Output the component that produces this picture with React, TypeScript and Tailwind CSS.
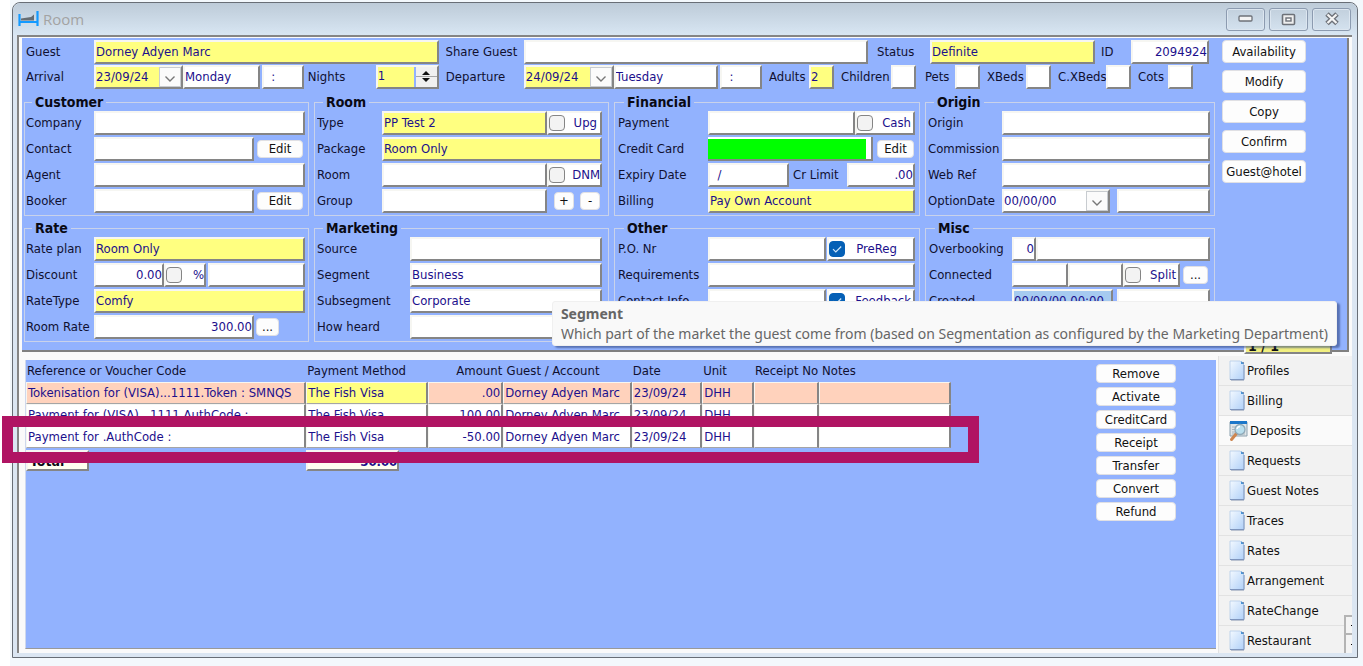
import type { ReactNode } from "react";
import clsx from "clsx";

const bevel =
  "border-2 border-t-[#f6f6f2] border-l-[#f6f6f2] border-r-[#858585] border-b-[#858585]";

const payments = [
  { ref: "Tokenisation for (VISA)...1111.Token : SMNQS", amount: ".00", token: true },
  { ref: "Payment for (VISA)...1111.AuthCode :", amount: "100.00", token: false },
  { ref: "Payment for .AuthCode :", amount: "-50.00", token: false },
];

const actions = ["Remove", "Activate", "CreditCard", "Receipt", "Transfer", "Convert", "Refund"];

const tabs = [
  "Profiles",
  "Billing",
  "Deposits",
  "Requests",
  "Guest Notes",
  "Traces",
  "Rates",
  "Arrangement",
  "RateChange",
  "Restaurant",
];

type FieldProps = {
  id?: string;
  name?: string;
  value?: string;
  tone?: "white" | "yellow" | "blue";
  className?: string;
};

function Field({ id, name, value = "", tone = "white", className = "flex-1" }: FieldProps) {
  return (
    <input
      id={id}
      aria-label={name}
      type="text"
      defaultValue={value}
      className={clsx(
        "h-6 min-w-0 rounded-none pb-0.5 text-[#1c108c] outline-none",
        bevel,
        tone === "yellow" && "bg-[#ffff80]",
        tone === "blue" && "bg-[#a6caf0]",
        tone === "white" && "bg-white",
        className
      )}
    />
  );
}

function Label({ htmlFor, className, children }: { htmlFor: string; className?: string; children: ReactNode }) {
  return (
    <label htmlFor={htmlFor} className={clsx("shrink-0 overflow-hidden whitespace-nowrap text-[#101030]", className)}>
      {children}
    </label>
  );
}

function DateField({ id, value, tone, className }: { id: string; value: string; tone?: string; className?: string }) {
  return (
    <div className={clsx("relative h-6 shrink-0", bevel, tone === "yellow" ? "bg-[#ffff80]" : "bg-white", className)}>
      <select id={id} defaultValue={value} className="h-5 w-full appearance-none bg-transparent text-[#1c108c] outline-none">
        <option>{value}</option>
      </select>
      <span className="pointer-events-none absolute inset-y-0 right-0 flex w-[22px] items-center justify-center border border-[#c8ccd0] bg-[#fbfbfb] pt-1">
        <svg width="12" height="8" viewBox="0 0 12 8" fill="none" stroke="#777" strokeWidth="1.4">
          <path d="M1.5 1.5 6 6l4.500-4.500" />
        </svg>
      </span>
    </div>
  );
}

function Check({ label, checked, className }: { label: string; checked?: boolean; className?: string }) {
  return (
    <label
      className={clsx(
        "relative flex h-6 shrink-0 items-center justify-between overflow-hidden whitespace-nowrap bg-white text-[#1c108c]",
        bevel,
        className
      )}
    >
      <input
        type="checkbox"
        defaultChecked={checked}
        className="size-4 shrink-0 appearance-none rounded border border-[#858585] bg-[#f3f3f3] checked:border-[#0560b6] checked:bg-[#0560b6]"
      />
      {checked && (
        <svg className="pointer-events-none absolute left-0.5 size-3" viewBox="0 0 12 12" fill="none" stroke="#cfe6fa" strokeWidth="1.2">
          <path d="M2 6.200 4.800 9 10.200 3.500" />
        </svg>
      )}
      <span>{label}</span>
    </label>
  );
}

function PlainButton({ children, className }: { children: ReactNode; className?: string }) {
  return (
    <button
      type="button"
      className={clsx(
        "flex shrink-0 items-center justify-center overflow-hidden whitespace-nowrap rounded border border-[#e0e0e4] bg-[#fdfdfd] text-[#111]",
        className
      )}
    >
      {children}
    </button>
  );
}

function Group({ title, className, children }: { title: string; className?: string; children: ReactNode }) {
  return (
    <fieldset className={clsx("min-w-0 border border-[#c9d2ea] pb-0.5", className)}>
      <legend className="ml-1.5 px-[3px] text-sm leading-[18px] font-bold text-[#0a0a14]">{title}</legend>
      <div className="flex flex-col gap-0.5">{children}</div>
    </fieldset>
  );
}

function Row({ children }: { children: ReactNode }) {
  return <div className="flex h-6 items-center">{children}</div>;
}

function Spinner() {
  return (
    <div className="flex w-[23px] flex-col border-l-2 border-[#92b2fe] bg-[#f0f0f0]">
      <button type="button" aria-label="More nights" className="flex h-2.5 items-end justify-center border-b border-[#a8a8a8] pb-px">
        <svg width="8" height="4" viewBox="0 0 8 4"><path d="M0 4 4 0 8 4Z" fill="#111" /></svg>
      </button>
      <button type="button" aria-label="Fewer nights" className="flex h-2.5 items-start justify-center pt-px">
        <svg width="8" height="4" viewBox="0 0 8 4"><path d="M0 0 4 4 8 0Z" fill="#111" /></svg>
      </button>
    </div>
  );
}

function PageIcon() {
  return (
    <svg width="17" height="22" viewBox="0 0 17 22" className="shrink-0">
      <defs>
        <linearGradient id="page" x1="0" y1="0" x2="1" y2="1">
          <stop offset="0" stopColor="#f3f9ff" />
          <stop offset="1" stopColor="#b0d0f8" />
        </linearGradient>
      </defs>
      <path d="M2 2h13v18.500H2z" fill="#8392ae" />
      <path d="M1 1h10l4 4v14.500H1z" fill="url(#page)" stroke="#b4cbe8" strokeWidth=".8" />
      <path d="M15 5v14.500H1" fill="none" stroke="#7e95bd" />
      <path d="M12 1v3h3z" fill="#4b94d6" />
    </svg>
  );
}

function DepositsIcon() {
  return (
    <svg width="20" height="22" viewBox="0 0 20 22" className="shrink-0">
      <path d="M1 2h17v14H1z" fill="#dfe5e8" stroke="#8ba0ae" />
      <path d="M1 1h17v3H1z" fill="#1c77c9" />
      <path d="M3 7h13M3 9.500h13M3 12h13M3 14h13" stroke="#aab5bc" />
      <path d="m7.500 13.500-5 6" stroke="#ce8650" strokeWidth="3" strokeLinecap="round" />
      <circle cx="11" cy="9.500" r="5" fill="#b9dfee" stroke="#8fa9b8" strokeWidth="1.300" />
      <path d="M8 9a3 3 0 0 1 3-2.500" fill="none" stroke="#fff" strokeWidth="1.300" />
    </svg>
  );
}

function TitleBar() {
  const control = "flex h-[23px] w-[39px] items-center justify-center rounded-[3px] border border-[#8c9bb0] shadow-[inset_0_0_0_1px_#dce6f0]";
  return (
    <header className="flex h-8 shrink-0 items-center rounded-t-lg bg-linear-to-b from-[#bdcbd8] to-[#d8e6f3] pr-1.5 pl-[5px]">
      <svg width="21" height="16" viewBox="0 0 21 16">
        <path d="M1.500 3v12M19.500 0v15M1 11h18" stroke="#149aff" strokeWidth="2.200" />
        <path d="M3 9.500V7.500l10-1.500L16 3.500V9.500z" fill="#666d73" />
      </svg>
      <h1 className="ml-1 flex-1 font-['Open_Sans',sans-serif] text-[15px] leading-5 text-[#a3a3a3]">Room</h1>
      <div className="flex gap-1">
        <button type="button" aria-label="Minimize" className={control}>
          <svg width="15" height="8" viewBox="0 0 15 8"><rect x="1" y="1" width="13" height="5" rx="1" fill="#f4f4f4" stroke="#6d7178" strokeWidth="1.300" /></svg>
        </button>
        <button type="button" aria-label="Maximize" className={control}>
          <svg width="15" height="13" viewBox="0 0 15 13"><rect x="1.500" y="1.500" width="12" height="10" rx="1" fill="#eee" stroke="#6d7178" strokeWidth="1.600" /><rect x="5" y="5" width="5" height="3" fill="#fff" stroke="#6d7178" strokeWidth="1.400" /></svg>
        </button>
        <button type="button" aria-label="Close" className={control}>
          <svg width="16" height="14" viewBox="0 0 16 14"><path d="m3 2 10 9.500M13 2 3 11.500" stroke="#6d7178" strokeWidth="5" /><path d="m3.500 2.500 9 8.500M12.500 2.500l-9 8.500" stroke="#f4f4f4" strokeWidth="2.300" /></svg>
        </button>
      </div>
    </header>
  );
}

function Header() {
  return (
    <div className="flex flex-col gap-px pl-1">
      <div className="flex h-6 items-center pr-1.5">
        <Label htmlFor="guest" className="w-[68px]">Guest</Label>
        <Field id="guest" value="Dorney Adyen Marc" tone="yellow" className="flex-[2]" />
        <Label htmlFor="share" className="ml-[7px] mr-1.5 w-[72px]">Share Guest</Label>
        <Field id="share" className="flex-[2]" />
        <Label htmlFor="status" className="ml-[9px] w-[53px]">Status</Label>
        <Field id="status" value="Definite" tone="yellow" className="w-[165px]" />
        <Label htmlFor="resid" className="ml-1.5 w-[30px]">ID</Label>
        <Field id="resid" value="2094924" className="w-[78px] text-right" />
      </div>
      <div className="flex h-6 items-center pr-[22px]">
        <Label htmlFor="arrival" className="w-[68px]">Arrival</Label>
        <DateField id="arrival" value="23/09/24" tone="yellow" className="w-[89px]" />
        <Field name="Arrival day" value="Monday" className="flex-[8]" />
        <Field name="Arrival time" value="  :" className="ml-0.5 w-[42px]" />
        <Label htmlFor="nights" className="ml-1 w-[68px]">Nights</Label>
        <div className={clsx("flex h-6 w-[63px] bg-[#ffff80]", bevel)}>
          <input id="nights" defaultValue="1" className="min-w-0 flex-1 pb-0.5 text-[#1c108c] outline-none" />
          <Spinner />
        </div>
        <Label htmlFor="departure" className="ml-[7px] w-[78px]">Departure</Label>
        <DateField id="departure" value="24/09/24" tone="yellow" className="w-[90px]" />
        <Field name="Departure day" value="Tuesday" className="flex-[11]" />
        <Field name="Departure time" value="  :" className="ml-0.5 w-[42px]" />
        <Label htmlFor="adults" className="ml-[7px] w-10">Adults</Label>
        <Field id="adults" value="2" tone="yellow" className="w-[25px]" />
        <Label htmlFor="children" className="ml-[7px] w-[50px]">Children</Label>
        <Field id="children" className="w-[25px]" />
        <Label htmlFor="pets" className="ml-[9px] w-[30px]">Pets</Label>
        <Field id="pets" className="w-[25px]" />
        <Label htmlFor="xbeds" className="ml-[7px] w-[39px]">XBeds</Label>
        <Field id="xbeds" className="w-[25px]" />
        <Label htmlFor="cxbeds" className="ml-[7px] w-12">C.XBeds</Label>
        <Field id="cxbeds" className="w-[25px]" />
        <Label htmlFor="cots" className="ml-[7px] w-[30px]">Cots</Label>
        <Field id="cots" className="w-[25px]" />
      </div>
    </div>
  );
}

function Groups() {
  const l1 = "w-[68px]";
  const l2 = "w-[65px]";
  const l3 = "w-[90px]";
  return (
    <div className="mt-1 ml-0.5 grid grid-cols-[285fr_295fr_306fr_290fr] gap-x-[5px] gap-y-[3px]">
      <Group title="Customer" className="pr-[3px] pl-px">
        <Row>
          <Label htmlFor="company" className={l1}>Company</Label>
          <Field id="company" />
        </Row>
        <Row>
          <Label htmlFor="contact" className={l1}>Contact</Label>
          <Field id="contact" />
          <PlainButton className="mr-0.5 ml-[3px] h-[18px] w-[46px]">Edit</PlainButton>
        </Row>
        <Row>
          <Label htmlFor="agent" className={l1}>Agent</Label>
          <Field id="agent" />
        </Row>
        <Row>
          <Label htmlFor="booker" className={l1}>Booker</Label>
          <Field id="booker" />
          <PlainButton className="mr-0.5 ml-[3px] h-[18px] w-[46px]">Edit</PlainButton>
        </Row>
      </Group>

      <Group title="Room" className="pr-1.5 pl-0.5">
        <Row>
          <Label htmlFor="type" className={l2}>Type</Label>
          <Field id="type" value="PP Test 2" tone="yellow" />
          <Check label="Upg" className="w-[55px] pr-[3px]" />
        </Row>
        <Row>
          <Label htmlFor="package" className={l2}>Package</Label>
          <Field id="package" value="Room Only" tone="yellow" />
        </Row>
        <Row>
          <Label htmlFor="room" className={l2}>Room</Label>
          <Field id="room" />
          <Check label="DNM" className="w-[55px]" />
        </Row>
        <Row>
          <Label htmlFor="group" className={l2}>Group</Label>
          <Field id="group" />
          <PlainButton className="ml-[7px] h-[18px] w-5">+</PlainButton>
          <PlainButton className="mr-0.5 ml-1.5 h-[18px] w-5">-</PlainButton>
        </Row>
      </Group>

      <Group title="Financial" className="pr-1 pl-[3px]">
        <Row>
          <Label htmlFor="payment" className={l3}>Payment</Label>
          <Field id="payment" />
          <Check label="Cash" className="w-[60px] pr-0.5" />
        </Row>
        <Row>
          <Label htmlFor="card" className={l3}>Credit Card</Label>
          <div className="flex h-6 flex-1 border-r-2 border-b-2 border-[#858585] bg-white pt-0.5 pr-[5px]">
            <input id="card" type="text" className="min-w-0 flex-1 bg-[#00ff00] outline-none" />
          </div>
          <PlainButton className="mr-px ml-1 h-[18px] w-[37px]">Edit</PlainButton>
        </Row>
        <Row>
          <Label htmlFor="expiry" className={l3}>Expiry Date</Label>
          <Field id="expiry" value="  /" />
          <Label htmlFor="limit" className="ml-1 w-[54px]">Cr Limit</Label>
          <Field id="limit" value=".00" className="w-[68px] text-right" />
        </Row>
        <Row>
          <Label htmlFor="billing" className={l3}>Billing</Label>
          <Field id="billing" value="Pay Own Account" tone="yellow" />
        </Row>
      </Group>

      <Group title="Origin" className="pr-1 pl-0.5">
        <Row>
          <Label htmlFor="origin" className="w-[74px]">Origin</Label>
          <Field id="origin" />
        </Row>
        <Row>
          <Label htmlFor="commission" className="w-[74px]">Commission</Label>
          <Field id="commission" />
        </Row>
        <Row>
          <Label htmlFor="webref" className="w-[74px]">Web Ref</Label>
          <Field id="webref" />
        </Row>
        <Row>
          <Label htmlFor="option" className="w-[74px]">OptionDate</Label>
          <DateField id="option" value="00/00/00" className="w-[108px]" />
          <Field name="Option time" className="ml-[7px] flex-1" />
        </Row>
      </Group>

      <Group title="Rate" className="pr-[3px] pl-px">
        <Row>
          <Label htmlFor="rateplan" className={l1}>Rate plan</Label>
          <Field id="rateplan" value="Room Only" tone="yellow" />
        </Row>
        <Row>
          <Label htmlFor="discount" className={l1}>Discount</Label>
          <Field id="discount" value="0.00" className="w-[70px] text-right" />
          <Check label="%" className="w-[42px]" />
          <Field name="Discount reason" className="ml-0.5 flex-1" />
        </Row>
        <Row>
          <Label htmlFor="ratetype" className={l1}>RateType</Label>
          <Field id="ratetype" value="Comfy" tone="yellow" />
        </Row>
        <Row>
          <Label htmlFor="roomrate" className={l1}>Room Rate</Label>
          <Field id="roomrate" value="300.00" className="flex-1 text-right" />
          <PlainButton className="mr-[26px] ml-0.5 h-[18px] w-[23px]">...</PlainButton>
        </Row>
      </Group>

      <Group title="Marketing" className="pr-1.5 pl-0.5">
        <Row>
          <Label htmlFor="source" className="w-[93px]">Source</Label>
          <Field id="source" />
        </Row>
        <Row>
          <Label htmlFor="segment" className="w-[93px]">Segment</Label>
          <Field id="segment" value="Business" />
        </Row>
        <Row>
          <Label htmlFor="subsegment" className="w-[93px]">Subsegment</Label>
          <Field id="subsegment" value="Corporate" />
        </Row>
        <Row>
          <Label htmlFor="heard" className="w-[93px]">How heard</Label>
          <Field id="heard" />
        </Row>
      </Group>

      <Group title="Other" className="pr-1 pl-[3px]">
        <Row>
          <Label htmlFor="ponr" className={l3}>P.O. Nr</Label>
          <Field id="ponr" />
          <Check label="PreReg" checked className="ml-px w-[88px] pr-4" />
        </Row>
        <Row>
          <Label htmlFor="requirements" className={l3}>Requirements</Label>
          <Field id="requirements" />
        </Row>
        <Row>
          <Label htmlFor="info" className={l3}>Contact Info</Label>
          <Field id="info" />
          <Check label="Feedback" checked className="ml-px w-[88px] pr-0.5" />
        </Row>
      </Group>

      <Group title="Misc" className="pr-1 pl-[3px]">
        <Row>
          <Label htmlFor="overbooking" className="w-[83px]">Overbooking</Label>
          <Field id="overbooking" value="0" className="w-6 text-right" />
          <Field name="Overbooking reason" />
        </Row>
        <Row>
          <Label htmlFor="connected" className="w-[83px]">Connected</Label>
          <Field id="connected" />
          <Field name="Connected to" />
          <Check label="Split" className="w-[57px] pr-0.5" />
          <PlainButton className="mr-0.5 ml-[3px] h-[18px] w-[25px]">...</PlainButton>
        </Row>
        <Row>
          <Label htmlFor="created" className="w-[83px]">Created</Label>
          <Field id="created" value="00/00/00 00:00" tone="blue" className="w-[101px]" />
          <Field name="Created by" className="ml-1 flex-1" />
        </Row>
      </Group>
    </div>
  );
}

function PaymentsTable() {
  const cell = "overflow-hidden border-r-2 border-b border-t border-l border-t-[#f6f6f2] border-l-[#f6f6f2] border-r-[#858585] border-b-[#a5a5a5] pr-px pl-px whitespace-nowrap";
  return (
    <table className="w-full table-fixed border-separate border-spacing-0 text-left text-[#1c108c]">
      <colgroup>
        <col className="w-[30.3%]" />
        <col className="w-[13.2%]" />
        <col className="w-[8.1%]" />
        <col className="w-[13.9%]" />
        <col className="w-[7.6%]" />
        <col className="w-[5.6%]" />
        <col className="w-[7%]" />
        <col className="w-[14.3%]" />
      </colgroup>
      <thead>
        <tr className="h-[22px] text-[#101030] [&>th]:overflow-visible [&>th]:px-px [&>th]:font-normal [&>th]:whitespace-nowrap">
          <th>Reference or Voucher Code</th>
          <th>Payment Method</th>
          <th className="text-right">Amount</th>
          <th>&thinsp;Guest / Account</th>
          <th>Date</th>
          <th>Unit</th>
          <th>Receipt No</th>
          <th>&thinsp;Notes</th>
        </tr>
      </thead>
      <tbody>
        {payments.map((p) => (
          <tr key={p.ref} className={clsx("h-[22px]", p.token ? "bg-[#ffd2bc]" : "bg-white")}>
            <td className={cell}>{p.ref}</td>
            <td className={clsx(cell, p.token && "bg-[#ffff80]")}>The Fish Visa</td>
            <td className={clsx(cell, "text-right")}>{p.amount}</td>
            <td className={cell}>Dorney Adyen Marc</td>
            <td className={cell}>23/09/24</td>
            <td className={cell}>DHH</td>
            <td className={cell}></td>
            <td className={cell}></td>
          </tr>
        ))}
      </tbody>
      <tfoot>
        <tr className="font-bold [&>td]:pt-0.5">
          <td>
            <div className={clsx("h-[21px] w-[63px] bg-[#fffff0] px-0.5 text-sm leading-[19px] text-[#0a0a14]", bevel)}>Total</div>
          </td>
          <td>
            <div className={clsx("h-[21px] w-[93px] bg-[#fffff0] text-right leading-[19px]", bevel)}>50.00</div>
          </td>
          <td colSpan={6}></td>
        </tr>
      </tfoot>
    </table>
  );
}

function Tabs() {
  return (
    <nav className="relative flex w-[134px] shrink-0 flex-col overflow-hidden bg-[#f2f2f2] text-[#111] [contain:size]">
      {tabs.map((tab) => {
        const active = tab === "Deposits";
        return (
          <button
            key={tab}
            type="button"
            className={clsx(
              "flex h-[30px] shrink-0 items-center border-b border-l border-[#e2e2e2] pl-2.5 text-left",
              active && "bg-[#fafafa]"
            )}
          >
            {active ? <DepositsIcon /> : <PageIcon />}
            <span className="ml-px">{tab}</span>
          </button>
        );
      })}
      <div className="absolute right-0 bottom-0 flex w-2 flex-col">
        <button type="button" aria-label="Scroll up" className="flex h-5 items-center justify-end border-2 border-r-0 border-[#b4b4b4] bg-[#f4f4f4]">
          <span className="size-px bg-black" />
        </button>
        <button type="button" aria-label="Scroll down" className="flex h-[18px] items-center justify-end border-l-2 border-[#b4b4b4] bg-[#f4f4f4]">
          <span className="size-px bg-black" />
        </button>
      </div>
    </nav>
  );
}

export default function App() {
  return (
    <div className="flex min-h-screen flex-col border-l-[10px] border-white bg-[#f3f8fc] pt-0.5 pr-[5px] pb-2 pl-0.5 font-['DejaVu_Sans_Condensed','DejaVu_Sans',sans-serif] text-[13px] leading-4">
      <div className="flex flex-1 flex-col rounded-t-lg border border-[#686e76] bg-[#dbe6f2]">
        <TitleBar />
        <main className="mr-[5px] mb-1 ml-1 flex flex-1 flex-col border-t-2 border-l-2 border-[#858585] bg-[#fafafa]">
          <section className="relative mt-px mr-[3px] ml-[3px] flex border-r-2 border-b-2 border-[#808080] bg-[#92b2fe] pt-0.5 pb-2">
            <div className="min-w-0 flex-1">
              <Header />
              <Groups />
            </div>
            <div className="ml-[7px] flex w-[125px] flex-col gap-[7px]">
              <PlainButton className="h-[23px] w-[84px]">Availability</PlainButton>
              <PlainButton className="h-[23px] w-[84px]">Modify</PlainButton>
              <PlainButton className="h-[23px] w-[84px]">Copy</PlainButton>
              <PlainButton className="h-[23px] w-[84px]">Confirm</PlainButton>
              <PlainButton className="h-[23px] w-[84px]">Guest@hotel</PlainButton>
              <output className={clsx("mt-auto -mb-3 ml-[22px] h-5 w-[88px] bg-[#f2f080] px-0.5 text-sm leading-5 font-bold text-[#111]", bevel)}>
                1 / 1
              </output>
            </div>
            <div
              role="tooltip"
              className="absolute right-2.5 bottom-1 rounded-[3px] border border-[#f0f0f0] bg-[#f9f9f9] pt-0.5 pr-2 pb-px pl-2 font-['Noto_Sans',sans-serif] text-sm leading-5 whitespace-nowrap text-[#666] shadow-[3px_2px_2px_#2a3f7890]"
            >
              <p className="font-bold">Segment</p>
              <p>Which part of the market the guest come from (based on Segmentation as configured by the Marketing Department)</p>
            </div>
          </section>

          <div className="flex flex-1 gap-0.5 pt-1">
            <section className="mt-1 mb-1 ml-1.5 flex flex-1 items-start border-b border-l border-b-[#999] border-l-[#cfd8ec] bg-[#92b2fe]">
              <div className="relative flex-1">
                <PaymentsTable />
                {/* marker around the refund line */}
                <div className="pointer-events-none absolute top-14 -right-7 -left-6 h-[47px] border-[11px] border-[#b01463]" />
              </div>
              <div className="mt-1 mr-10 ml-[145px] flex w-20 flex-col gap-1">
                {actions.map((action) => (
                  <PlainButton key={action} className="h-[19px]">{action}</PlainButton>
                ))}
              </div>
            </section>
            <Tabs />
          </div>
        </main>
      </div>
    </div>
  );
}
